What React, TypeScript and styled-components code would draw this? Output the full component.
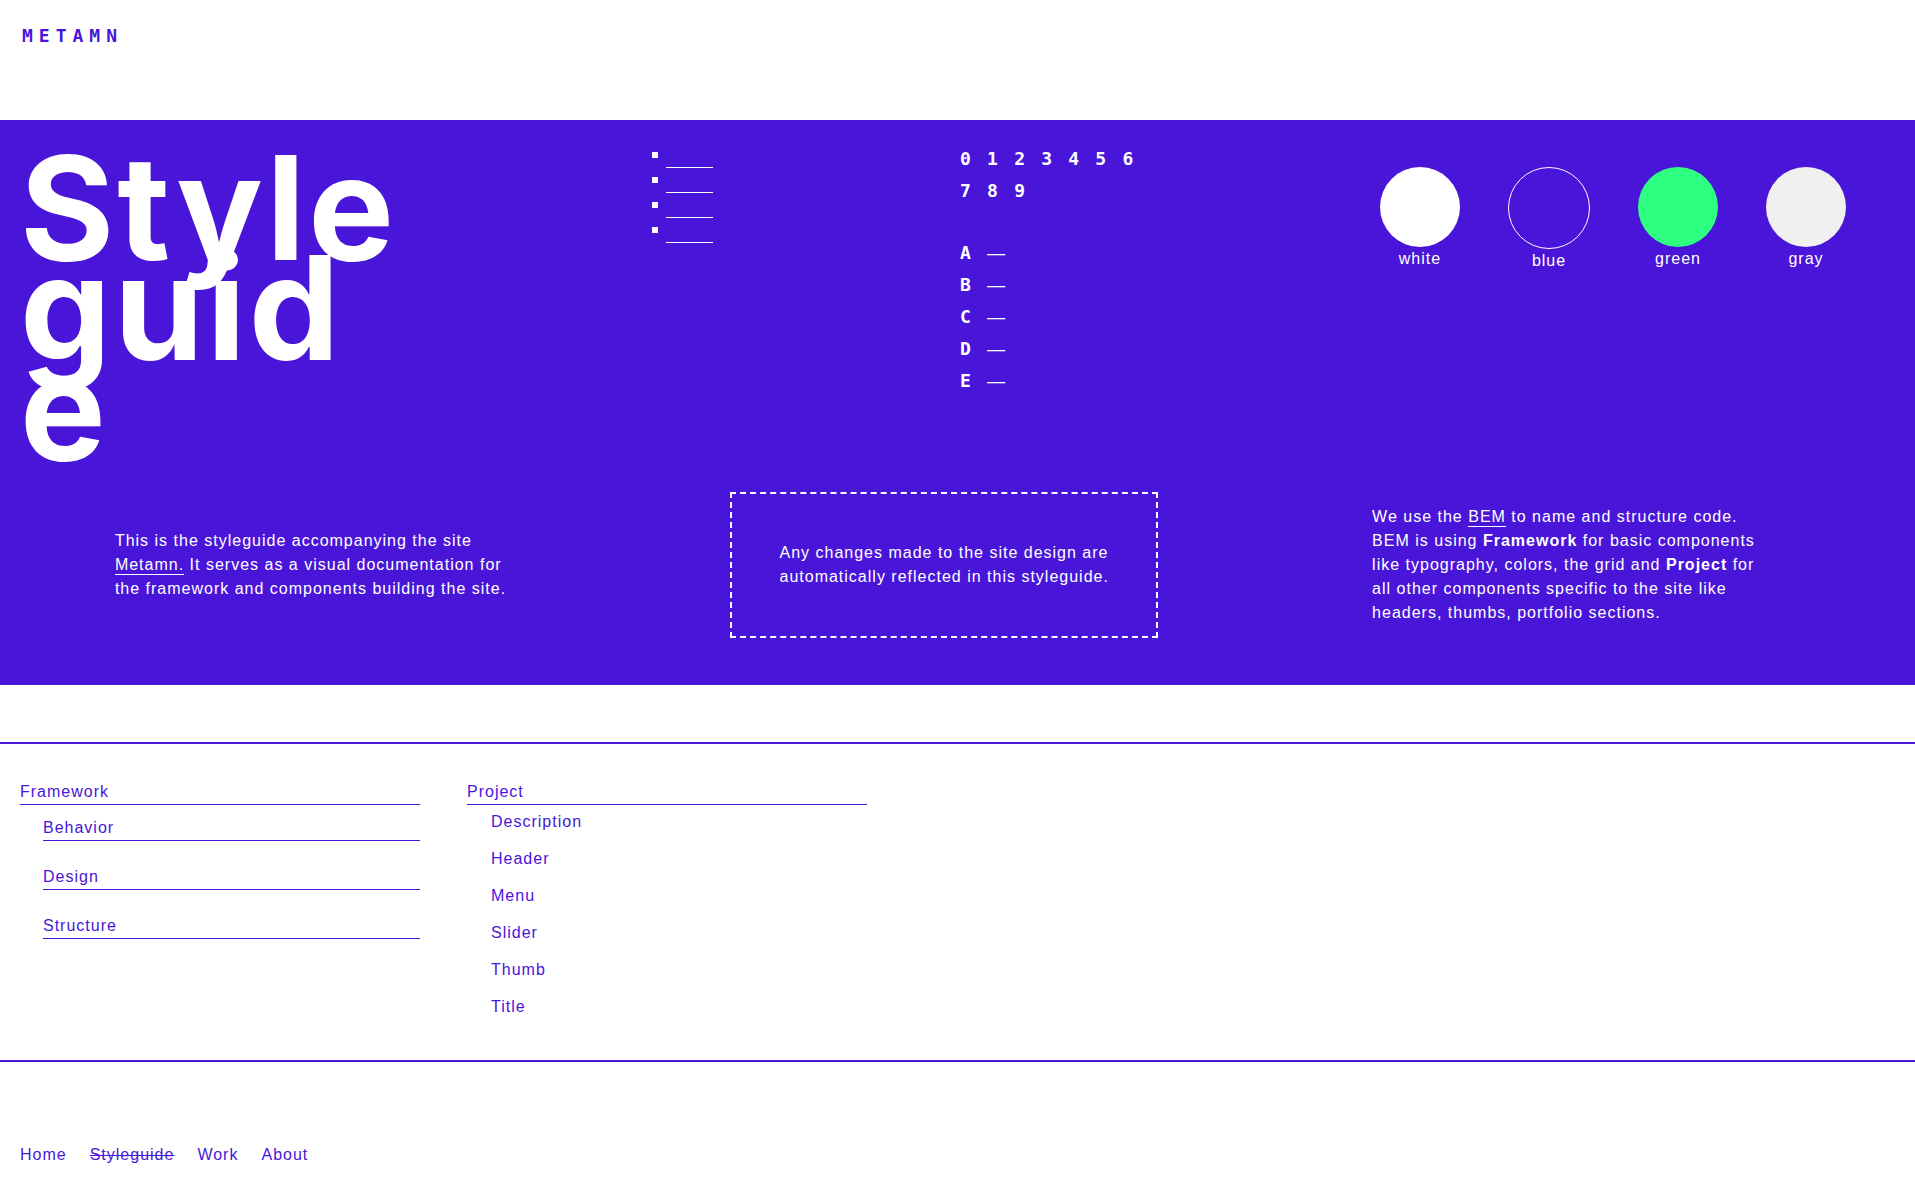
import React from 'react';
import styled, { createGlobalStyle } from 'styled-components';

const blue = '#4915d9';

const GlobalStyle = createGlobalStyle`
  *, *::before, *::after { box-sizing: border-box; }
  body {
    margin: 0;
    background: #fff;
    color: ${blue};
    font: 16px/24px "Liberation Sans", Arial, sans-serif;
    letter-spacing: 1px;
  }
  h1, h2, p, ul, figure { margin: 0; padding: 0; }
  ul { list-style: none; }
  a { color: inherit; text-decoration: none; }
`;

const Header = styled.header`
  padding: 20px 22px 68px;
`;

const Logo = styled.a`
  display: inline-block;
  font: bold 18px/32px "DejaVu Sans Mono", monospace;
  letter-spacing: 6px;
`;

const Hero = styled.section`
  padding: 23px 0 47px;
  background: ${blue};
  color: #fff;
`;

const Showcase = styled.div`
  display: grid;
  grid-template-columns: 632fr 308fr 420fr 515fr;
  align-items: start;
  padding: 0 20px;
`;

const Title = styled.h1`
  max-width: 390px;
  margin-top: 15px;
  font-family: Inter, "Liberation Sans", sans-serif;
  font-size: 144px;
  line-height: 100px;
  letter-spacing: 3px;
  word-break: break-all;
`;

const Markers = styled.ul`
  display: grid;
`;

const Marker = styled.li`
  display: flex;
  gap: 8px;
  height: 25px;

  &::before {
    content: '';
    width: 6px;
    height: 6px;
    margin-top: 9px;
    background: currentColor;
  }

  &::after {
    content: '';
    width: 47px;
    border-bottom: 1px solid;
  }
`;

const Glyphs = styled.div`
  max-width: 200px;
  font: bold 18px/32px "DejaVu Sans Mono", monospace;
  letter-spacing: 0.15em;
`;

const Letters = styled.ul`
  margin-top: 30px;
`;

const Dash = styled.span`
  font-family: "Liberation Sans", Arial, sans-serif;
  font-weight: normal;
  line-height: 1;
`;

const Swatches = styled.div`
  display: flex;
  align-items: flex-start;
  gap: 48px;
  padding-top: 24px;
`;

const Swatch = styled.figure`
  display: flex;
  flex-direction: column;
  align-items: center;
`;

const Disc = styled.div<{ $color: string; $outlined?: boolean }>`
  box-sizing: content-box;
  width: 80px;
  height: 80px;
  border: ${(p) => (p.$outlined ? '1px solid #fff' : '0')};
  border-radius: 50%;
  background: ${(p) => p.$color};
`;

const Notes = styled.div`
  display: flex;
  justify-content: space-between;
  align-items: center;
  margin-top: 34px;
  padding: 0 6%;
`;

const Intro = styled.p`
  width: 400px;
`;

const Notice = styled.p`
  width: 428px;
  padding: 47px 32px 47px 48px;
  border: 2px dashed;
`;

const Naming = styled.p`
  width: 428px;
  padding-right: 32px;
`;

const TextLink = styled.a`
  padding-bottom: 1px;
  border-bottom: 1px solid;
`;

const Index = styled.nav`
  display: flex;
  gap: 47px;
  margin-top: 57px;
  padding: 36px 20px 41px;
  border: solid ${blue};
  border-width: 2px 0;
`;

const Group = styled.section`
  width: 400px;
`;

const GroupTitle = styled.h2`
  font-size: 16px;
  font-weight: normal;
  line-height: 24px;
  border-bottom: 1px solid;
`;

const RuledList = styled.ul`
  display: grid;
  gap: 24px;
  padding: 11px 0 0 23px;

  li { border-bottom: 1px solid; }
`;

const PlainList = styled.ul`
  display: grid;
  gap: 13px;
  padding: 5px 0 0 24px;
`;

const Menu = styled.nav`
  display: flex;
  gap: 23px;
  padding: 81px 20px 26px;
`;

const MenuLink = styled.a<{ $current?: boolean }>`
  text-decoration: ${(p) => (p.$current ? 'line-through' : 'none')};
`;

const swatches = [
  { name: 'white', color: '#fff' },
  { name: 'blue', color: blue, outlined: true },
  { name: 'green', color: '#2fff80' },
  { name: 'gray', color: '#f0f0f0' },
];

export default function App() {
  return (
    <>
      <GlobalStyle />
      <Header>
        <Logo href="#">METAMN</Logo>
      </Header>
      <main>
        <Hero>
          <Showcase>
            <Title>Styleguide</Title>
            <Markers>
              {[1, 2, 3, 4].map((n) => (
                <Marker key={n} />
              ))}
            </Markers>
            <Glyphs>
              <p>0 1 2 3 4 5 6 7 8 9</p>
              <Letters>
                {['A', 'B', 'C', 'D', 'E'].map((letter) => (
                  <li key={letter}>
                    {letter} <Dash>—</Dash>
                  </li>
                ))}
              </Letters>
            </Glyphs>
            <Swatches>
              {swatches.map((s) => (
                <Swatch key={s.name}>
                  <Disc $color={s.color} $outlined={s.outlined} />
                  <figcaption>{s.name}</figcaption>
                </Swatch>
              ))}
            </Swatches>
          </Showcase>
          <Notes>
            <Intro>
              This is the styleguide accompanying the site <TextLink href="#">Metamn.</TextLink> It
              serves as a visual documentation for the framework and components building the site.
            </Intro>
            <Notice>
              Any changes made to the site design are automatically reflected in this styleguide.
            </Notice>
            <Naming>
              We use the <TextLink href="#">BEM</TextLink> to name and structure code. BEM is using{' '}
              <strong>Framework</strong> for basic components like typography, colors, the grid and{' '}
              <strong>Project</strong> for all other components specific to the site like headers,
              thumbs, portfolio sections.
            </Naming>
          </Notes>
        </Hero>
        <Index>
          <Group>
            <GroupTitle>Framework</GroupTitle>
            <RuledList>
              {['Behavior', 'Design', 'Structure'].map((item) => (
                <li key={item}>{item}</li>
              ))}
            </RuledList>
          </Group>
          <Group>
            <GroupTitle>Project</GroupTitle>
            <PlainList>
              {['Description', 'Header', 'Menu', 'Slider', 'Thumb', 'Title'].map((item) => (
                <li key={item}>
                  <a href="#">{item}</a>
                </li>
              ))}
            </PlainList>
          </Group>
        </Index>
      </main>
      <Menu>
        <MenuLink href="#">Home</MenuLink>
        <MenuLink href="#" $current>
          Styleguide
        </MenuLink>
        <MenuLink href="#">Work</MenuLink>
        <MenuLink href="#">About</MenuLink>
      </Menu>
    </>
  );
}
